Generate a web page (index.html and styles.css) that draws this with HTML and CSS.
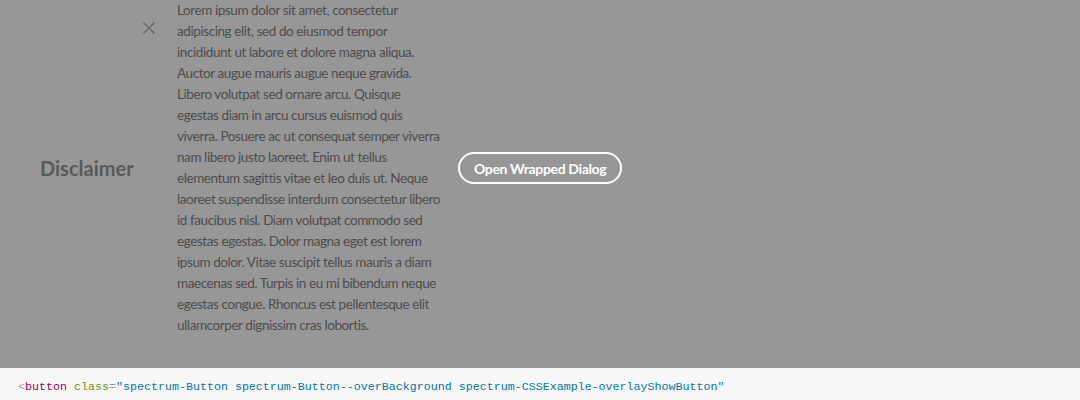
FILE: index.html
```html
<!DOCTYPE html>
<html>
<head>
<meta charset="utf-8">
<link rel="stylesheet" href="styles.css">
</head>
<body>
<div class="stage">
  <div class="dialog">
    <h2 class="heading">Disclaimer</h2>
    <button class="close" aria-label="Close">
      <svg width="14" height="14" viewBox="0 0 14 14"><path d="M1.5 1.5L12.5 12.5M12.5 1.5L1.5 12.5" stroke="#6b6b6b" stroke-width="1.6" fill="none"/></svg>
    </button>
    <div class="content">Lorem ipsum dolor sit amet, consectetur<br>adipiscing elit, sed do eiusmod tempor<br>incididunt ut labore et dolore magna aliqua.<br>Auctor augue mauris augue neque gravida.<br>Libero volutpat sed ornare arcu. Quisque<br>egestas diam in arcu cursus euismod quis<br>viverra. Posuere ac ut consequat semper viverra<br>nam libero justo laoreet. Enim ut tellus<br>elementum sagittis vitae et leo duis ut. Neque<br>laoreet suspendisse interdum consectetur libero<br>id faucibus nisl. Diam volutpat commodo sed<br>egestas egestas. Dolor magna eget est lorem<br>ipsum dolor. Vitae suscipit tellus mauris a diam<br>maecenas sed. Turpis in eu mi bibendum neque<br>egestas congue. Rhoncus est pellentesque elit<br>ullamcorper dignissim cras lobortis.</div>
  </div>
  <button class="show-btn">Open Wrapped Dialog</button>
</div>
<div class="code"><span class="punc">&lt;</span><span class="tag">button</span> <span class="attr">class</span><span class="punc">=</span><span class="val">"spectrum-Button spectrum-Button--overBackground spectrum-CSSExample-overlayShowButton"</span></div>
</body>
</html>
```
FILE: styles.css
```css
html, body {
  margin: 0;
  padding: 0;
  background: #f8f8f8;
}
body {
  width: 1080px;
  height: 400px;
  overflow: hidden;
  font-family: Lato, "Open Sans", sans-serif;
}
.stage {
  height: 336px;
  padding: 0 0 32px 40px;
  background: #979797;
  display: flex;
  align-items: center;
}
.dialog {
  display: flex;
  align-items: center;
  height: 336px;
}
.heading {
  margin: 0;
  font-size: 20px;
  font-weight: 700;
  color: #5a5a5a;
  width: 93px;
  white-space: nowrap;
}
.close {
  align-self: flex-start;
  margin: 21px 0 0 9px;
  padding: 0;
  border: 0;
  background: none;
  width: 14px;
  height: 14px;
  display: flex;
}
.content {
  margin-left: 21px;
  width: 265px;
  font-size: 13.5px;
  line-height: 21px;
  color: #4c4c4c;
  white-space: nowrap;
  letter-spacing: -0.42px;
  margin-top: -1px;
}
.show-btn {
  margin-left: 16px;
  height: 32px;
  padding: 0 14px;
  border: 2px solid #ffffff;
  border-radius: 16px;
  background: transparent;
  color: #ffffff;
  font-family: Lato, "Open Sans", sans-serif;
  font-weight: 700;
  font-size: 14px;
  letter-spacing: -0.35px;
  box-sizing: border-box;
}
.code {
  height: 32px;
  padding: 6px 0 0 18px;
  line-height: 26px;
  font-family: "Liberation Mono", monospace;
  font-size: 11.67px;
  white-space: pre;
  box-sizing: border-box;
}
.punc { color: #999999; }
.tag { color: #990055; }
.attr { color: #669900; }
.val { color: #0077aa; }
```
